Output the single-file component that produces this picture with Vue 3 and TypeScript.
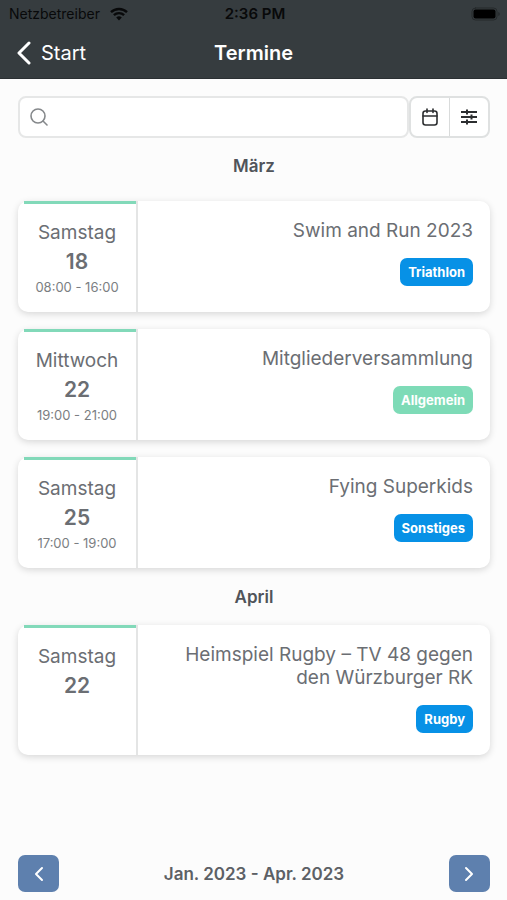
<script setup lang="ts">
import { ref } from 'vue'

interface EventItem {
  weekday: string
  day: string
  time?: string
  title: string
  category: string
  tone: 'blue' | 'green'
}

interface MonthGroup {
  name: string
  events: EventItem[]
}

const query = ref('')

const months: MonthGroup[] = [
  {
    name: 'März',
    events: [
      { weekday: 'Samstag', day: '18', time: '08:00 - 16:00', title: 'Swim and Run 2023', category: 'Triathlon', tone: 'blue' },
      { weekday: 'Mittwoch', day: '22', time: '19:00 - 21:00', title: 'Mitgliederversammlung', category: 'Allgemein', tone: 'green' },
      { weekday: 'Samstag', day: '25', time: '17:00 - 19:00', title: 'Fying Superkids', category: 'Sonstiges', tone: 'blue' },
    ],
  },
  {
    name: 'April',
    events: [
      { weekday: 'Samstag', day: '22', title: 'Heimspiel Rugby – TV 48 gegen den Würzburger RK', category: 'Rugby', tone: 'blue' },
    ],
  },
]
</script>

<template>
  <div class="screen">
    <header class="header">
      <div class="status">
        <span class="carrier">
          Netzbetreiber
          <svg class="wifi" viewBox="0 0 18 14" aria-hidden="true">
            <path d="M1 5.2a11.5 11.5 0 0 1 16 0" />
            <path d="M3.9 8.2a7.4 7.4 0 0 1 10.2 0" />
            <path class="dot" d="M6.2 10.6a4.2 4.2 0 0 1 5.6 0L9 13.6z" />
          </svg>
        </span>
        <span class="clock">2:36 PM</span>
        <svg class="battery" viewBox="0 0 30 14" aria-hidden="true">
          <rect class="shell" x="1" y="1" width="25" height="12" rx="3.5" />
          <rect x="2.5" y="2.5" width="22" height="9" rx="2" />
          <path class="tip" d="M27.5 5v4c1.4-.5 1.4-3.5 0-4z" />
        </svg>
      </div>
      <nav class="nav">
        <a class="back" href="#start">
          <svg viewBox="0 0 14 24" aria-hidden="true"><path d="M12 2 2 12l10 10" /></svg>
          Start
        </a>
        <h1 class="title">Termine</h1>
      </nav>
    </header>

    <main class="content">
      <div class="toolbar">
        <label class="search">
          <svg viewBox="0 0 18 18" aria-hidden="true">
            <circle cx="8" cy="8" r="7" />
            <path d="m13 13 4 4" />
          </svg>
          <input v-model="query" type="search" aria-label="Suche" />
        </label>
        <div class="tools">
          <button type="button" aria-label="Kalender">
            <svg viewBox="0 0 18 18" aria-hidden="true">
              <rect x="2" y="3" width="14" height="14" rx="2.5" />
              <path d="M2 8h14M6 1v3.500M12 1v3.500" />
            </svg>
          </button>
          <button type="button" aria-label="Filter">
            <svg class="sliders" viewBox="0 0 18 18" aria-hidden="true">
              <path d="M1 4h16M1 9h16M1 14h16M7 1.500v5M11.500 6.500v5M7 11.500v5" />
            </svg>
          </button>
        </div>
      </div>

      <section v-for="month in months" :key="month.name" class="month">
        <h2 class="month-name">{{ month.name }}</h2>
        <div class="cards">
          <article v-for="event in month.events" :key="event.title" class="card">
            <div class="date">
              <span class="weekday">{{ event.weekday }}</span>
              <span class="day">{{ event.day }}</span>
              <span v-if="event.time" class="time">{{ event.time }}</span>
            </div>
            <div class="details">
              <h3 class="event-title">{{ event.title }}</h3>
              <span class="badge" :class="event.tone">{{ event.category }}</span>
            </div>
          </article>
        </div>
      </section>
    </main>

    <footer class="pager">
      <button type="button" aria-label="Zurück">
        <svg viewBox="0 0 10 16" aria-hidden="true"><path d="M8 2 2 8l6 6" /></svg>
      </button>
      <span class="range">Jan. 2023 - Apr. 2023</span>
      <button type="button" aria-label="Weiter">
        <svg viewBox="0 0 10 16" aria-hidden="true"><path d="m2 2 6 6-6 6" /></svg>
      </button>
    </footer>
  </div>
</template>

<style>
body {
  margin: 0;
  background: #fcfcfc;
}
</style>

<style scoped>
.screen {
  box-sizing: border-box;
  display: flex;
  flex-direction: column;
  min-height: 100vh;
  background: #fcfcfc;
  color: #6b6e73;
  font-family: Inter, 'Liberation Sans', sans-serif;
}

svg {
  flex: none;
  fill: none;
  stroke: currentColor;
  stroke-linecap: round;
  stroke-linejoin: round;
}

button {
  display: flex;
  align-items: center;
  justify-content: center;
  margin: 0;
  padding: 0;
  border: 0;
  cursor: pointer;
}

h1,
h2,
h3 {
  margin: 0;
}

.header {
  background: #363c3f;
  border-bottom: 1px solid #2b3033;
}

.status {
  display: grid;
  grid-template-columns: 1fr auto 1fr;
  align-items: center;
  height: 27px;
  padding: 0 6px 0 9px;
  color: #08090a;
  font-size: 14px;
}

.carrier {
  display: flex;
  align-items: center;
  gap: 10px;
}

.wifi {
  width: 18px;
  height: 14px;
  stroke-width: 2.4;
  stroke-linecap: butt;
}

.wifi .dot {
  fill: currentColor;
  stroke: none;
}

.clock {
  font-size: 15px;
  font-weight: 600;
}

.battery {
  justify-self: end;
  width: 30px;
  height: 14px;
  fill: #000000;
  stroke: none;
}

.battery .shell {
  fill: none;
  stroke: #25292b;
}

.battery .tip {
  fill: #1c2022;
}

.nav {
  display: grid;
  grid-template-columns: 1fr auto 1fr;
  align-items: center;
  height: 51px;
  padding: 0 17px;
  color: #ffffff;
}

.back {
  display: flex;
  align-items: center;
  gap: 10px;
  color: inherit;
  font-size: 20px;
  text-decoration: none;
}

.back svg {
  width: 14px;
  height: 24px;
  stroke-width: 3;
}

.title {
  font-size: 20px;
  font-weight: 600;
}

.content {
  padding: 17px 17px 24px 18px;
}

.toolbar {
  display: flex;
}

.search,
.tools {
  box-sizing: border-box;
  display: flex;
  height: 42px;
  border: 2px solid #e6e7e7;
  border-radius: 8px;
  background: #ffffff;
}

.search {
  flex: 1;
  align-items: center;
  gap: 10px;
  padding: 0 10px;
  color: #85888b;
}

.search svg {
  width: 18px;
  height: 18px;
  stroke-width: 1.6;
}

.search input {
  flex: 1;
  min-width: 0;
  padding: 0;
  border: 0;
  outline: 0;
  background: transparent;
  color: #50545a;
  font: inherit;
  font-size: 16px;
}

.tools {
  width: 81px;
  border-color: #dfe1e1;
}

.tools button {
  flex: 1;
  background: transparent;
  color: #2c2e30;
}

.tools button:first-child {
  border-right: 1px solid #d9dbdb;
}

.tools svg {
  width: 18px;
  height: 18px;
  stroke-width: 1.6;
}

.tools .sliders {
  stroke-linecap: butt;
  stroke-width: 2;
}

.month-name {
  padding: 17px 0 16px;
  color: #50545a;
  font-size: 17px;
  font-weight: 600;
  line-height: 24px;
  text-align: center;
}

.month:first-of-type .month-name {
  padding: 16px 0 23px;
}

.cards {
  display: grid;
  gap: 17px;
}

.card {
  display: flex;
  border-radius: 10px;
  background: #ffffff;
  box-shadow: 0 2px 7px rgba(0, 0, 0, 0.15);
}

.date {
  box-sizing: border-box;
  display: flex;
  flex: none;
  flex-direction: column;
  align-items: center;
  width: 120px;
  padding: 17px 0 14px;
  border-right: 2px solid #e4e5e5;
  background: linear-gradient(#82d9b9, #82d9b9) right top / calc(100% - 6px) 3px no-repeat;
}

.weekday {
  font-size: 19px;
  line-height: 29px;
}

.day {
  font-size: 21px;
  font-weight: 600;
  line-height: 29px;
}

.time {
  color: #7b7e82;
  font-size: 13px;
  line-height: 22px;
}

.details {
  display: flex;
  flex: 1;
  flex-direction: column;
  align-items: flex-end;
  gap: 16px;
  min-width: 0;
  padding: 18px 17px 22px;
}

.event-title {
  font-size: 19px;
  font-weight: 400;
  line-height: 23px;
  text-align: right;
}

.badge {
  padding: 0 8px;
  border-radius: 7px;
  color: #ffffff;
  font-size: 13px;
  font-weight: 700;
  line-height: 28px;
}

.badge.blue {
  background: #0791e6;
}

.badge.green {
  background: #7edbb7;
}

.pager {
  display: flex;
  align-items: center;
  justify-content: space-between;
  margin-top: auto;
  padding: 0 17px 8px 18px;
}

.pager button {
  width: 41px;
  height: 37px;
  border-radius: 7px;
  background: #5e80ae;
  color: #ffffff;
}

.pager svg {
  width: 10px;
  height: 16px;
  stroke-width: 2;
}

.range {
  color: #5c6065;
  font-size: 17px;
  font-weight: 600;
}
</style>
